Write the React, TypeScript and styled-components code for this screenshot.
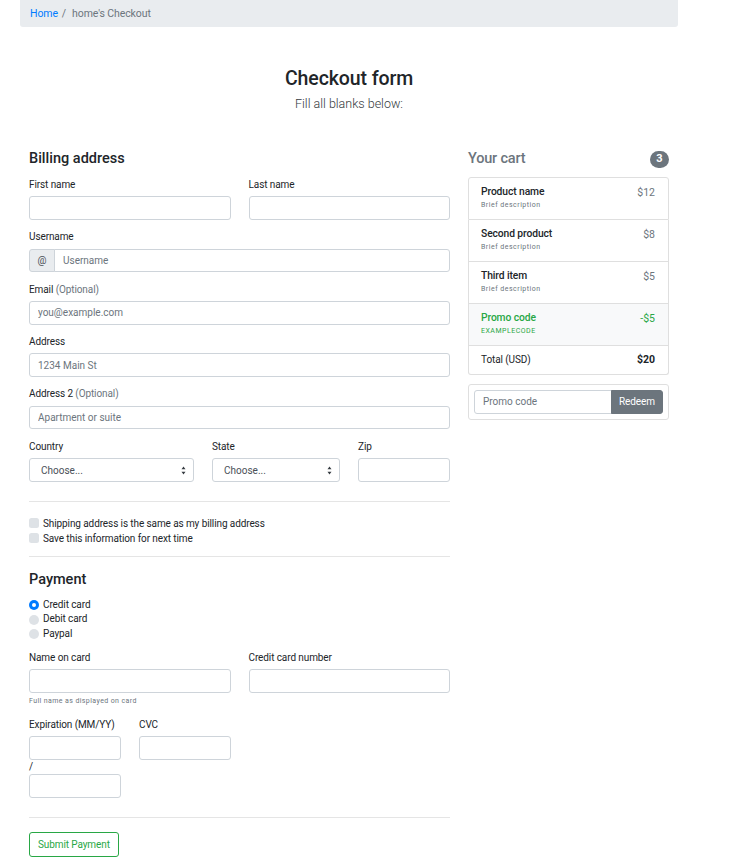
import React from "react";
import styled, { createGlobalStyle } from "styled-components";

const Global = createGlobalStyle`
  html, body { margin: 0; padding: 0; background: #fff; }
  body {
    font-family: Roboto, "Liberation Sans", Arial, sans-serif;
    font-size: 10px;
    letter-spacing: -0.1px;
    line-height: 1.5;
    color: #212529;
  }
  * { box-sizing: border-box; }
`;

const Container = styled.div`
  width: 658px;
  margin-left: 20px;
  padding-bottom: 12px;
`;

const Breadcrumb = styled.nav`
  height: 27px;
  background: #e9ecef;
  border-radius: 0 0 3px 3px;
  display: flex;
  align-items: center;
  padding: 0 10px;
  font-size: 10.5px;
  color: #6c757d;
`;

const CrumbLink = styled.a`
  color: #007bff;
  text-decoration: none;
`;

const Sep = styled.span`
  padding: 0 6px 0 4px;
  color: #6c757d;
`;

const Header = styled.header`
  text-align: center;
  padding-top: 40px;
`;

const Title = styled.h2`
  margin: 0;
  font-size: 19.5px;
  letter-spacing: -0.1px;
  line-height: 23.4px;
  font-weight: 500;
`;

const Lead = styled.p`
  margin: 3.5px 0 0;
  font-size: 12.5px;
  letter-spacing: 0;
  line-height: 19.7px;
  font-weight: 300;
  color: #343a40;
`;

const Row = styled.div`
  display: flex;
  margin-top: 36.7px;
`;

const Col = styled.div<{ $w: number }>`
  width: ${(p) => p.$w}px;
  padding: 0 9px;
`;

const SectionTitle = styled.h4<{ $mb?: number }>`
  margin: 0 0 ${(p) => p.$mb ?? 7.6}px;
  font-size: 14.5px;
  letter-spacing: 0;
  line-height: 18.9px;
  font-weight: 500;
`;

const Grid = styled.div<{ $cols: string }>`
  display: grid;
  grid-template-columns: ${(p) => p.$cols};
  column-gap: 18px;
  align-items: start;
`;

const Field = styled.div<{ $mb?: number }>`
  margin-bottom: ${(p) => p.$mb ?? 9.4}px;
`;

const Label = styled.label`
  display: block;
  line-height: 15px;
  margin-bottom: 4.5px;
`;

const Muted = styled.span`
  color: #6c757d;
`;

const Input = styled.input<{ $flat?: string }>`
  display: block;
  width: 100%;
  height: 23.5px;
  border: 1px solid #ced4da;
  border-radius: ${(p) =>
    p.$flat === "left" ? "0 3px 3px 0" : p.$flat === "right" ? "3px 0 0 3px" : "3px"};
  padding: 0 8px;
  font-family: inherit;
  font-size: 10px;
  letter-spacing: 0;
  color: #495057;
  background: #fff;
  outline: none;
  &::placeholder {
    color: #6c757d;
    opacity: 1;
  }
`;

const InputGroup = styled.div`
  display: flex;
  align-items: stretch;
`;

const Prepend = styled.span`
  flex: 0 0 26px;
  height: 23.5px;
  display: flex;
  align-items: center;
  justify-content: center;
  background: #e9ecef;
  border: 1px solid #ced4da;
  border-radius: 3px 0 0 3px;
  margin-right: -1px;
  color: #495057;
`;

const SelectBox = styled.div`
  height: 23.5px;
  border: 1px solid #ced4da;
  border-radius: 3px;
  display: flex;
  align-items: center;
  justify-content: space-between;
  padding: 0 7px 0 11px;
  color: #495057;
  letter-spacing: 0;
  background: #fff;
`;

const Divider = styled.hr<{ $mt: number; $mb: number }>`
  border: 0;
  border-top: 1px solid rgba(0, 0, 0, 0.1);
  margin: ${(p) => p.$mt}px 0 ${(p) => p.$mb}px;
  height: 0;
`;

const CheckRow = styled.div<{ $lh: number }>`
  display: flex;
  align-items: center;
  gap: 4px;
  line-height: ${(p) => p.$lh}px;
`;

const CheckBox = styled.span`
  width: 10px;
  height: 10px;
  border-radius: 2.5px;
  background: #dee2e6;
  flex: none;
`;

const Radio = styled.span<{ $on?: boolean }>`
  width: 10px;
  height: 10px;
  border-radius: 50%;
  flex: none;
  background: ${(p) => (p.$on ? "#007bff" : "#dee2e6")};
  display: flex;
  align-items: center;
  justify-content: center;
  &::after {
    content: "";
    width: 4px;
    height: 4px;
    border-radius: 50%;
    background: ${(p) => (p.$on ? "#fff" : "transparent")};
  }
`;

const RadioList = styled.div`
  margin-bottom: 8.25px;
`;

const Help = styled.small`
  display: block;
  margin-top: 3px;
  font-size: 7px;
  line-height: 10.5px;
  color: #6c757d;
  letter-spacing: 0.4px;
`;

const Slash = styled.div`
  line-height: 14.5px;
`;

const SubmitButton = styled.button`
  height: 25px;
  padding: 0 8px;
  border: 1px solid #28a745;
  border-radius: 3px;
  background: #fff;
  color: #28a745;
  font-family: inherit;
  font-size: 10px;
  letter-spacing: -0.1px;
`;

const CartHeader = styled.h4`
  display: flex;
  justify-content: space-between;
  align-items: center;
  margin: 0 0 7.6px;
  font-size: 14.5px;
  letter-spacing: -0.2px;
  line-height: 18.9px;
  font-weight: 500;
  color: #6c757d;
`;

const Badge = styled.span`
  min-width: 19px;
  height: 17px;
  padding: 0 6px;
  border-radius: 9px;
  background: #6c757d;
  color: #fff;
  font-size: 11px;
  letter-spacing: 0;
  font-weight: 700;
  display: inline-flex;
  align-items: center;
  justify-content: center;
`;

const List = styled.ul`
  list-style: none;
  margin: 0;
  padding: 0;
`;

const Item = styled.li<{ $promo?: boolean; $total?: boolean }>`
  display: flex;
  justify-content: space-between;
  align-items: flex-start;
  border: 1px solid #dfdfdf;
  &:not(:first-child) { border-top: none; }
  &:first-child { border-radius: 3px 3px 0 0; }
  &:last-child { border-radius: 0 0 3px 3px; }
  padding: ${(p) => (p.$total ? "6.5px 13px 6.5px 12px" : "7.5px 13px 7.5px 12px")};
  background: ${(p) => (p.$promo ? "#f8f9fa" : "#fff")};
  color: ${(p) => (p.$promo ? "#28a745" : "inherit")};
  line-height: 15px;
`;

const ItemTitle = styled.h6`
  margin: 0;
  font-size: 10.3px;
  letter-spacing: -0.1px;
  line-height: 13px;
  font-weight: 500;
`;

const ItemDesc = styled.small<{ $green?: boolean }>`
  display: block;
  margin-top: 2px;
  font-size: 7px;
  line-height: 11px;
  letter-spacing: 0.5px;
  color: ${(p) => (p.$green ? "#28a745" : "#6c757d")};
`;

const Price = styled.span<{ $green?: boolean }>`
  line-height: 13px;
  margin-top: 1px;
  font-size: 10.5px;
  letter-spacing: 0;
  color: ${(p) => (p.$green ? "#28a745" : "#6c757d")};
`;

const Strong = styled.strong`
  font-weight: 700;
  font-size: 10.5px;
  letter-spacing: 0;
`;

const PromoCard = styled.form`
  margin-top: 9px;
  border: 1px solid #dfdfdf;
  border-radius: 3px;
  padding: 5px;
`;

const RedeemButton = styled.button`
  flex: 0 0 52px;
  height: 24px;
  margin-left: -1px;
  border: 1px solid #6c757d;
  border-radius: 0 3px 3px 0;
  background: #6c757d;
  color: #fff;
  font-family: inherit;
  font-size: 10px;
  letter-spacing: -0.1px;
  padding: 0;
`;

const PromoInput = styled(Input)`
  height: 24px;
`;

const SelectArrow = () => (
  <svg width="5" height="9" viewBox="0 0 5 9" aria-hidden="true">
    <path d="M2.5 0.5 L4.5 3.3 L0.5 3.3 Z M0.5 5.7 L4.5 5.7 L2.5 8.5 Z" fill="#343a40" />
  </svg>
);

const Select = () => (
  <SelectBox>
    <span>Choose...</span>
    <SelectArrow />
  </SelectBox>
);

const cart = [
  { name: "Product name", desc: "Brief description", price: "$12" },
  { name: "Second product", desc: "Brief description", price: "$8" },
  { name: "Third item", desc: "Brief description", price: "$5" },
];

export default function App() {
  return (
    <>
      <Global />
      <Container>
        <Breadcrumb>
          <CrumbLink href="#">Home</CrumbLink>
          <Sep>/</Sep>
          <span>home's Checkout</span>
        </Breadcrumb>

        <Header>
          <Title>Checkout form</Title>
          <Lead>Fill all blanks below:</Lead>
        </Header>

        <Row>
          <Col $w={439}>
            <SectionTitle>Billing address</SectionTitle>
            <Grid $cols="1fr 1fr">
              <Field>
                <Label>First name</Label>
                <Input />
              </Field>
              <Field>
                <Label>Last name</Label>
                <Input />
              </Field>
            </Grid>
            <Field>
              <Label>Username</Label>
              <InputGroup>
                <Prepend>@</Prepend>
                <Input $flat="left" placeholder="Username" />
              </InputGroup>
            </Field>
            <Field>
              <Label>
                Email <Muted>(Optional)</Muted>
              </Label>
              <Input placeholder="you@example.com" />
            </Field>
            <Field>
              <Label>Address</Label>
              <Input placeholder="1234 Main St" />
            </Field>
            <Field>
              <Label>
                Address 2 <Muted>(Optional)</Muted>
              </Label>
              <Input placeholder="Apartment or suite" />
            </Field>
            <Grid $cols="165px 128px 1fr">
              <Field>
                <Label>Country</Label>
                <Select />
              </Field>
              <Field>
                <Label>State</Label>
                <Select />
              </Field>
              <Field>
                <Label>Zip</Label>
                <Input />
              </Field>
            </Grid>

            <Divider $mt={10} $mb={13.5} />
            <CheckRow $lh={15}>
              <CheckBox />
              <span>Shipping address is the same as my billing address</span>
            </CheckRow>
            <CheckRow $lh={15}>
              <CheckBox />
              <span>Save this information for next time</span>
            </CheckRow>
            <Divider $mt={10.5} $mb={13.5} />

            <SectionTitle $mb={8.35}>Payment</SectionTitle>
            <RadioList>
              <CheckRow $lh={14.5}>
                <Radio $on />
                <span>Credit card</span>
              </CheckRow>
              <CheckRow $lh={14.5}>
                <Radio />
                <span>Debit card</span>
              </CheckRow>
              <CheckRow $lh={14.5}>
                <Radio />
                <span>Paypal</span>
              </CheckRow>
            </RadioList>
            <Grid $cols="1fr 1fr">
              <Field $mb={10.5}>
                <Label>Name on card</Label>
                <Input />
                <Help>Full name as displayed on card</Help>
              </Field>
              <Field>
                <Label>Credit card number</Label>
                <Input />
              </Field>
            </Grid>
            <Grid $cols="92px 92px">
              <Field>
                <Label>Expiration (MM/YY)</Label>
                <Input />
                <Slash>/</Slash>
                <Input />
              </Field>
              <Field>
                <Label>CVC</Label>
                <Input />
              </Field>
            </Grid>
            <Divider $mt={10} $mb={14} />
            <SubmitButton type="button">Submit Payment</SubmitButton>
          </Col>

          <Col $w={219}>
            <CartHeader>
              <span>Your cart</span>
              <Badge>3</Badge>
            </CartHeader>
            <List>
              {cart.map((c) => (
                <Item key={c.name}>
                  <div>
                    <ItemTitle>{c.name}</ItemTitle>
                    <ItemDesc>{c.desc}</ItemDesc>
                  </div>
                  <Price>{c.price}</Price>
                </Item>
              ))}
              <Item $promo>
                <div>
                  <ItemTitle>Promo code</ItemTitle>
                  <ItemDesc $green>EXAMPLECODE</ItemDesc>
                </div>
                <Price $green>-$5</Price>
              </Item>
              <Item $total>
                <span>Total (USD)</span>
                <Strong>$20</Strong>
              </Item>
            </List>
            <PromoCard>
              <InputGroup>
                <PromoInput $flat="right" placeholder="Promo code" />
                <RedeemButton type="button">Redeem</RedeemButton>
              </InputGroup>
            </PromoCard>
          </Col>
        </Row>
      </Container>
    </>
  );
}
